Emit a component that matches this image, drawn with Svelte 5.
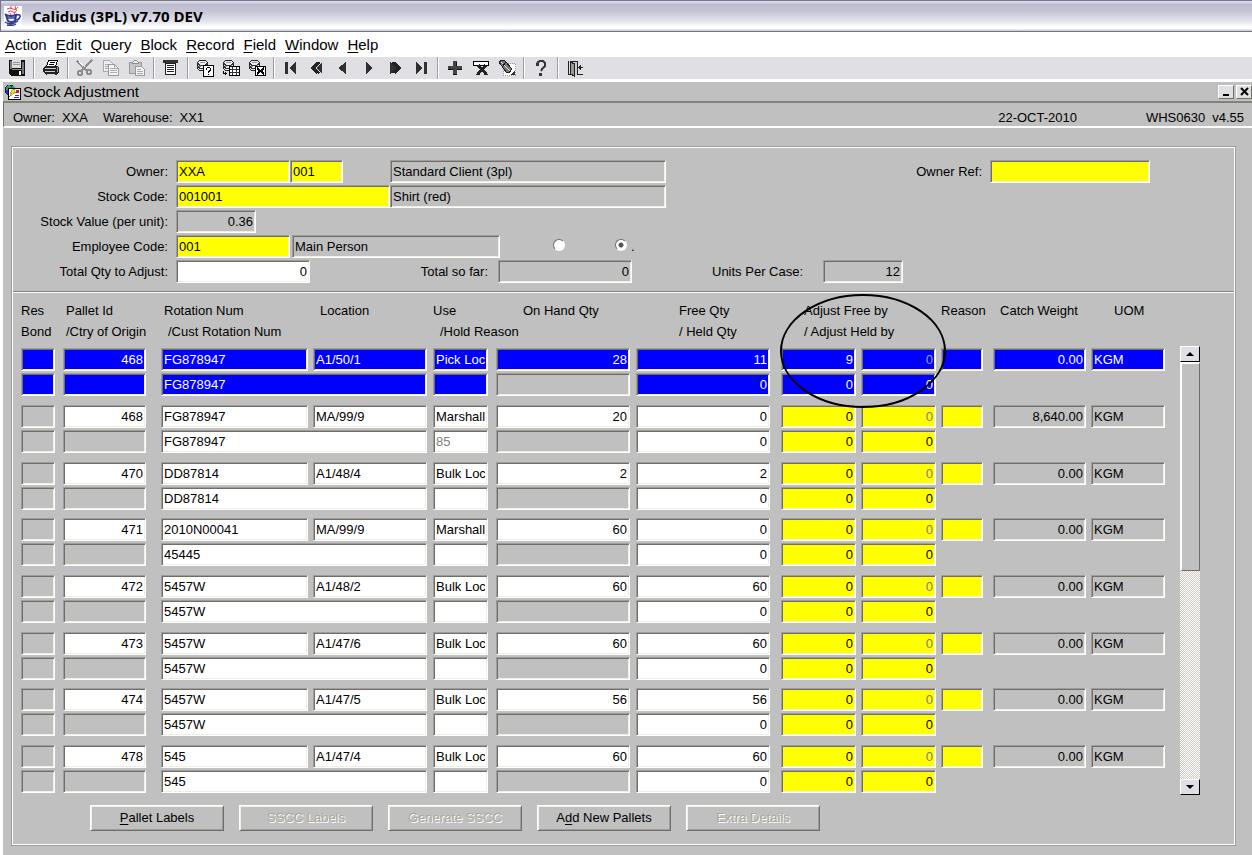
<script lang="ts">
	interface PalletRow {
		pallet: string;
		rotation: string;
		custRotation: string;
		location: string;
		use: string;
		hold?: string;
		onHand: string;
		free: string;
		adjustFree: string;
		weight: string;
	}

	const menus = ['Action', 'Edit', 'Query', 'Block', 'Record', 'Field', 'Window', 'Help'];

	const toolGroups = [
		['save'],
		['print'],
		['cut', 'copy', 'paste'],
		['list'],
		['enter query', 'execute query', 'cancel query'],
		['first', 'previous page', 'previous', 'next', 'next page', 'last'],
		['insert', 'delete', 'clear'],
		['help'],
		['exit']
	];

	let rows = $state<PalletRow[]>([
		{ pallet: '468', rotation: 'FG878947', custRotation: 'FG878947', location: 'A1/50/1', use: 'Pick Loc', onHand: '28', free: '11', adjustFree: '9', weight: '0.00' },
		{ pallet: '468', rotation: 'FG878947', custRotation: 'FG878947', location: 'MA/99/9', use: 'Marshall', hold: '85', onHand: '20', free: '0', adjustFree: '0', weight: '8,640.00' },
		{ pallet: '470', rotation: 'DD87814', custRotation: 'DD87814', location: 'A1/48/4', use: 'Bulk Loc', onHand: '2', free: '2', adjustFree: '0', weight: '0.00' },
		{ pallet: '471', rotation: '2010N00041', custRotation: '45445', location: 'MA/99/9', use: 'Marshall', onHand: '60', free: '0', adjustFree: '0', weight: '0.00' },
		{ pallet: '472', rotation: '5457W', custRotation: '5457W', location: 'A1/48/2', use: 'Bulk Loc', onHand: '60', free: '60', adjustFree: '0', weight: '0.00' },
		{ pallet: '473', rotation: '5457W', custRotation: '5457W', location: 'A1/47/6', use: 'Bulk Loc', onHand: '60', free: '60', adjustFree: '0', weight: '0.00' },
		{ pallet: '474', rotation: '5457W', custRotation: '5457W', location: 'A1/47/5', use: 'Bulk Loc', onHand: '56', free: '56', adjustFree: '0', weight: '0.00' },
		{ pallet: '478', rotation: '545', custRotation: '545', location: 'A1/47/4', use: 'Bulk Loc', onHand: '60', free: '60', adjustFree: '0', weight: '0.00' }
	]);

	let current = $state(0);
	let mode = $state('b');
	let owner = $state('XXA');
	let ownerSite = $state('001');
	let stockCode = $state('001001');
	let employee = $state('001');
	let totalQty = $state('0');
	let ownerRef = $state('');
</script>

{#snippet cell(label: string, value: string, kind: string)}
	<input class="field {kind}" aria-label={label} {value} readonly={kind.includes('grey')} />
{/snippet}

{#snippet database()}
	<path d="M1.500 3.500l2-2h6l2 2v6l-2 2h-6l-2-2z" fill="#eee" stroke="#222" />
	<path d="M1.500 4l2 2h6l2-2M1.500 7l2 2h6" fill="none" stroke="#333" />
	<path d="M4 3.500h5M3 7.500h2M9.500 6v5" fill="none" stroke="#999" />
{/snippet}

{#snippet icon(name: string)}
	<svg viewBox="0 0 18 18" width="18" height="18" shape-rendering="crispEdges" aria-hidden="true">
		{#if name === 'save'}
			<path d="M1 1h16v16H3l-2-2z" fill="#111" />
			<path d="M2 2h2v8H2zM14 3h2v12h-2z" fill="#777" />
			<path d="M4 1h9v8H4z" fill="#ddd" />
			<path d="M5 3.500h7M5 5.500h7" stroke="#999" />
			<path d="M4 10h10v1H4z" fill="#888" />
			<path d="M11 12h2v4h-2z" fill="#fff" />
		{:else if name === 'print'}
			<path d="M6.500 1.500h9l-2 6h-9z" fill="#fff" stroke="#000" />
			<path d="M8 3.500h5M7 5.500h5" stroke="#000" />
			<path d="M3 7h12l2 2v4l-2 2v1H4l-3-3v-3z" fill="#222" />
			<path d="M3 9.500h11M3 12.500h10" stroke="#ccc" />
			<path d="M15.500 8v5" stroke="#999" />
			<path d="M5 15.500h8" stroke="#ddd" />
		{:else if name === 'cut'}
			<path d="M1 2l4 4 6 6M16 1l-5 5-6 6" fill="none" stroke="#8c8c8c" stroke-width="2" />
			<circle cx="4" cy="14" r="2" fill="none" stroke="#8c8c8c" stroke-width="2" />
			<circle cx="13" cy="13" r="2" fill="none" stroke="#8c8c8c" stroke-width="2" />
			<path d="M3 3l6 5" stroke="#fff" />
		{:else if name === 'copy'}
			<path d="M1.500 1.500h6l3 3v8h-9z" fill="#eee" stroke="#aaa" />
			<path d="M3 5.500h5M3 7.500h5M3 9.500h4" stroke="#aaa" />
			<path d="M6.500 5.500h6l4 4v7h-10z" fill="#f4f4f4" stroke="#999" />
			<path d="M8 9.500h4M8 11.500h7M8 13.500h7M12.500 6v3.500H16" fill="none" stroke="#aaa" />
		{:else if name === 'paste'}
			<path d="M1.500 3.500h12v11h-12z" fill="#c6c6c6" stroke="#999" />
			<path d="M4.500 4.500v-1l2-2h2l2 2v1z" fill="#eee" stroke="#8c8c8c" />
			<path d="M7.500 7.500h6l3 3v6h-9z" fill="#f4f4f4" stroke="#999" />
			<path d="M9 10.500h4M9 12.500h6M9 14.500h6" stroke="#aaa" />
		{:else if name === 'list'}
			<path d="M1 1h15v3H1z" fill="#333" />
			<path d="M3.500 4.500h10v11h-10z" fill="#fff" stroke="#222" />
			<path d="M5 6.500h7M5 8.500h7M5 10.500h7M5 12.500h7" stroke="#222" />
		{:else if name === 'enter query'}
			{@render database()}
			<path d="M7.500 6.500h10v11h-10z" fill="#fff" stroke="#000" />
			<path d="M10.500 11V9.500l1-1h2l1 1v2l-2 1v1.500M12 15.500h1" fill="none" stroke="#000" />
		{:else if name === 'execute query'}
			{@render database()}
			<path d="M7.500 7.500h10v9h-10z" fill="#fff" stroke="#000" />
			<path d="M8 10.500h9M8 13.500h9M10.500 8v8M14.500 8v8" stroke="#333" />
			<path d="M1.500 12v2.500H5M3.500 13v3" fill="none" stroke="#000" />
		{:else if name === 'cancel query'}
			{@render database()}
			<path d="M7.500 7.500h10v9h-10z" fill="#fff" stroke="#000" />
			<path d="M9 9l7 6M16 9l-7 6" stroke="#000" stroke-width="2" />
		{:else if name === 'first'}
			<path d="M3 3h3v12H3zM14 3v12L7 9z" fill="#303030" />
		{:else if name === 'previous page'}
			<path d="M14 3v12L8 9z" fill="#303030" />
			<path d="M9.500 3.500L4 9l5.500 5.500M11.500 3.500L6.500 9l5 5.500" fill="none" stroke="#222" stroke-width="1.500" />
		{:else if name === 'previous'}
			<path d="M12 3v12L4 9z" fill="#303030" />
		{:else if name === 'next'}
			<path d="M6 3v12l7-6z" fill="#303030" />
		{:else if name === 'next page'}
			<path d="M4 3v12l6-6z" fill="#303030" />
			<path d="M6.500 3.500L11.500 9l-5 5.500M8.500 3.500L14 9l-5.500 5.500" fill="none" stroke="#222" stroke-width="1.500" />
		{:else if name === 'last'}
			<path d="M12 3h3v12h-3zM4 3v12l7-6z" fill="#303030" />
		{:else if name === 'insert'}
			<path d="M7 2h4v5h5v4h-5v5H7v-5H2V7h5z" fill="#444" />
			<path d="M7 15.500h4M2 10.500h5M11 10.500h5M10.500 3v4" stroke="#111" />
		{:else if name === 'delete'}
			<path d="M1.500 6.500v-4h15v4z" fill="#fff" stroke="#000" />
			<path d="M6 6l8 9M14 6l-8 9" stroke="#222" stroke-width="3" />
			<path d="M4 15.500h4M12 15.500h4" stroke="#222" />
		{:else if name === 'clear'}
			<path d="M5.500 4.500h12v12h-12z" fill="#fff" stroke="#999" stroke-dasharray="1 1" />
			<path d="M1 3l3-2 3 1 7 8-3 4-3-1z" fill="#777" stroke="#222" />
			<path d="M3 3l9 9" stroke="#ddd" />
			<path d="M5 7l3-4" stroke="#111" />
			<path d="M17 12v4h-5z" fill="#333" />
		{:else if name === 'help'}
			<path
				d="M5 5l1-2 2-1h3l2 2v3l-3 3-1 2"
				fill="none"
				stroke="#333"
				stroke-width="2"
				shape-rendering="auto"
			/>
			<path d="M4 4h3v3H4zM7 14h3v3H7z" fill="#333" />
		{:else if name === 'exit'}
			<path d="M2 15.500h2.500v-13h7v13H17" fill="#ccc" stroke="#222" />
			<path d="M4.500 3l4 2v12l-4-2z" fill="#999" stroke="#222" />
			<path d="M2.500 2v13M12 8.500h5M14.500 6v5M13.500 7v3" stroke="#222" />
		{/if}
	</svg>
{/snippet}

<div class="app">
	<header class="titlebar">
		<svg viewBox="0 0 18 20" width="18" height="20" aria-hidden="true">
			<path d="M0 0h18v20H0z" fill="#fff" />
			<path d="M3 3q3-2 6 0t5-2M4 6q3-2 5 0t4-2M7 0v3M11 0l1 4M6 7l1 2M11 6l-1 3" fill="none" stroke="#f0404c" />
			<path d="M2 9q5 2 10 0l-1 6q-4 2-7 0z" fill="#fff" stroke="#303c90" stroke-width="2" />
			<path d="M12 9q5-1 4 2t-4 3M4 12h7M1 16q6 4 13-1M3 19q6 1 9-1" fill="none" stroke="#303c90" stroke-width="1.500" />
		</svg>
		<h1>Calidus (3PL) v7.70 DEV</h1>
	</header>

	<nav class="menubar">
		{#each menus as menu}
			<button type="button"><u>{menu[0]}</u>{menu.slice(1)}</button>
		{/each}
	</nav>

	<div class="toolbar" role="toolbar" aria-label="Tools">
		{#each toolGroups as group}
			<div class="tool-group">
				{#each group as tool}
					<button type="button" aria-label={tool}>{@render icon(tool)}</button>
				{/each}
			</div>
		{/each}
	</div>

	<main class="window">
		<div class="window-title">
			<svg viewBox="0 0 17 16" width="17" height="16" shape-rendering="crispEdges" aria-hidden="true">
				<circle cx="6" cy="6" r="5" fill="#2038c0" stroke="#102040" />
				<path d="M2 3l3-2 2 2-2 4-3-1zM8 2l3 1 1 2H9z" fill="#30a060" />
				<path d="M4.500 4.500h12v11h-12z" fill="#fff" stroke="#000" />
				<path d="M5 13l3-4H6l3-4h2l-1 3h2z" fill="#f0e020" stroke="#807000" stroke-width="0.5" />
				<path d="M12 6h3v3h-3z" fill="#d02020" />
				<path d="M11 11.500h4M10 13.500h5" stroke="#2030c0" />
			</svg>
			<h2>Stock Adjustment</h2>
			<button type="button" aria-label="Minimize">
				<svg viewBox="0 0 11 9" width="11" height="9" aria-hidden="true"><path d="M2 7h6v2H2z" /></svg>
			</button>
			<button type="button" aria-label="Close">
				<svg viewBox="0 0 11 9" width="11" height="9" aria-hidden="true">
					<path d="M2 1l7 7M9 1L2 8" stroke="#000" stroke-width="2" />
				</svg>
			</button>
		</div>

		<div class="infobar">
			<span>Owner:</span><span>XXA</span>
			<span class="warehouse">Warehouse:</span><span>XX1</span>
			<time datetime="2010-10-22">22-OCT-2010</time>
			<span>WHS0630</span><span>v4.55</span>
		</div>

		<div class="frame">
			<section class="form">
				<div class="form-main">
					<div class="form-row">
						<label class="caption" for="owner">Owner:</label>
						<div class="codes">
							<input class="field yellow code" id="owner" bind:value={owner} />
							<input class="field yellow site" aria-label="Owner site" bind:value={ownerSite} />
						</div>
						<input class="field grey desc" aria-label="Owner name" value="Standard Client (3pl)" readonly />
					</div>
					<div class="form-row">
						<label class="caption" for="stock">Stock Code:</label>
						<div class="codes">
							<input class="field yellow" id="stock" bind:value={stockCode} />
						</div>
						<input class="field grey desc" aria-label="Stock description" value="Shirt (red)" readonly />
					</div>
					<div class="form-row">
						<label class="caption" for="value">Stock Value (per unit):</label>
						<input class="field grey num short" id="value" value="0.36" readonly />
					</div>
					<div class="form-row">
						<label class="caption" for="employee">Employee Code:</label>
						<input class="field yellow code" id="employee" bind:value={employee} />
						<input class="field grey person" aria-label="Employee name" value="Main Person" readonly />
						<div class="radios">
							<input type="radio" name="mode" value="a" aria-label="Mode" bind:group={mode} />
							<label><input type="radio" name="mode" value="b" bind:group={mode} />.</label>
						</div>
					</div>
					<div class="form-row">
						<label class="caption" for="total">Total Qty to Adjust:</label>
						<input class="field white num total" id="total" bind:value={totalQty} />
						<label class="sofar" for="sofar">Total so far:</label>
						<input class="field grey num total" id="sofar" value="0" readonly />
					</div>
				</div>
				<div class="units">
					<label for="units">Units Per Case:</label>
					<input class="field grey num short" id="units" value="12" readonly />
				</div>
				<div class="owner-ref">
					<label for="ref">Owner Ref:</label>
					<input class="field yellow" id="ref" bind:value={ownerRef} />
				</div>
			</section>

			<section class="stock">
				<div class="grid-area">
					<table>
						<colgroup>
							<col class="c-res" /><col class="c-pallet" /><col class="c-rotation" />
							<col class="c-location" /><col class="c-use" /><col class="c-onhand" />
							<col class="c-free" /><col class="c-adjust" /><col class="c-adjust" />
							<col class="c-reason" /><col class="c-weight" /><col class="c-uom" />
						</colgroup>
						<thead>
							<tr>
								<th>Res</th>
								<th class="in-1">Pallet Id</th>
								<th class="in-1">Rotation Num</th>
								<th class="in-2">Location</th>
								<th>Use</th>
								<th class="in-4">On Hand Qty</th>
								<th class="in-5">Free Qty</th>
								<th colspan="2" class="in-3 circled">
									Adjust Free by
									<svg class="ring" viewBox="0 0 166 114" width="166" height="114" aria-hidden="true">
										<ellipse cx="83" cy="57" rx="82" ry="56" fill="none" stroke="#000" stroke-width="2" />
									</svg>
								</th>
								<th>Reason</th>
								<th class="in-2">Catch Weight</th>
								<th class="in-3">UOM</th>
							</tr>
							<tr>
								<th>Bond</th>
								<th class="in-1">/Ctry of Origin</th>
								<th colspan="2" class="in-2">/Cust Rotation Num</th>
								<th colspan="2" class="in-2">/Hold Reason</th>
								<th class="in-5">/ Held Qty</th>
								<th colspan="2" class="in-3">/ Adjust Held by</th>
								<th></th><th></th><th></th>
							</tr>
						</thead>
						{#each rows as row, i}
							{@const on = i === current}
							{@const data = on ? 'blue' : 'white'}
							{@const flag = on ? 'blue' : 'grey'}
							{@const entry = on ? 'blue' : 'yellow'}
							<tbody onfocusin={() => (current = i)}>
								<tr>
									<td class="g-8">{@render cell('Reserved', '', flag)}</td>
									<td class="g-15">{@render cell('Pallet Id', row.pallet, data + ' num')}</td>
									<td class="g-5">{@render cell('Rotation Num', row.rotation, data)}</td>
									<td class="g-6">{@render cell('Location', row.location, data)}</td>
									<td class="g-8">{@render cell('Use', row.use, data)}</td>
									<td class="g-6">{@render cell('On Hand Qty', row.onHand, data + ' num')}</td>
									<td class="g-11">{@render cell('Free Qty', row.free, data + ' num')}</td>
									<td class="g-5">{@render cell('Adjust Free by', row.adjustFree, entry + ' num')}</td>
									<td class="g-5">{@render cell('Adjust Free cases', '0', entry + ' num dim')}</td>
									<td class="g-10">{@render cell('Reason', '', entry)}</td>
									<td class="g-5">{@render cell('Catch Weight', row.weight, flag + ' num')}</td>
									<td>{@render cell('UOM', 'KGM', flag)}</td>
								</tr>
								<tr>
									<td class="g-8">{@render cell('Bond', '', flag)}</td>
									<td class="g-15">{@render cell('Country of Origin', '', flag)}</td>
									<td class="g-6" colspan="2">{@render cell('Cust Rotation Num', row.custRotation, data)}</td>
									<td class="g-8">{@render cell('Hold Reason', row.hold ?? '', data + ' dim')}</td>
									<td class="g-6">{@render cell('On hand, held', '', 'grey')}</td>
									<td class="g-11">{@render cell('Held Qty', '0', data + ' num')}</td>
									<td class="g-5">{@render cell('Adjust Held by', '0', entry + ' num')}</td>
									<td class="g-5">{@render cell('Adjust Held cases', '0', entry + ' num')}</td>
									<td colspan="3"></td>
								</tr>
							</tbody>
						{/each}
					</table>

					<div class="scrollbar">
						<button type="button" aria-label="Scroll up">
							<svg viewBox="0 0 8 4" width="8" height="4" aria-hidden="true"><path d="M4 0l4 4H0z" /></svg>
						</button>
						<div class="track"><div class="thumb"></div></div>
						<button type="button" aria-label="Scroll down">
							<svg viewBox="0 0 8 4" width="8" height="4" aria-hidden="true"><path d="M0 0h8L4 4z" /></svg>
						</button>
					</div>
				</div>

				<div class="actions">
					<button type="button"><u>P</u>allet Labels</button>
					<button type="button" disabled>SSCC Labels</button>
					<button type="button" disabled>Generate SSCC</button>
					<button type="button">A<u>d</u>d New Pallets</button>
					<button type="button" disabled>Extra Details</button>
				</div>
			</section>
		</div>
	</main>
</div>

<style>
	:global(body) {
		background: #fff;
	}
	.app {
		display: flex;
		flex-direction: column;
		min-height: 100vh;
		color: #000;
		font: 13px/16px 'Liberation Sans', Arial, sans-serif;
	}
	button,
	input {
		box-sizing: border-box;
		font: inherit;
		color: inherit;
		border-radius: 0;
		margin: 0;
	}
	h1,
	h2 {
		margin: 0;
	}

	.titlebar {
		display: flex;
		align-items: center;
		gap: 10px;
		height: 32px;
		padding-left: 3px;
		box-sizing: border-box;
		border: solid #74748f;
		border-width: 1px 0 1px 1px;
		background: linear-gradient(#e4e4ee, #bcbcce 12%, #c6c6d6 35%, #e6e6ee 70%, #fff 86%, #fff 92%, #c0c0d0);
	}
	.titlebar h1 {
		font: bold 15px/20px 'Trebuchet MS', 'Open Sans', sans-serif;
	}

	.menubar {
		display: flex;
		gap: 9px;
		height: 25px;
		padding-left: 5px;
		background: #fff;
	}
	.menubar button {
		padding: 0;
		border: 0;
		background: none;
		font-size: 15px;
	}
	u {
		text-underline-offset: 2px;
	}

	.toolbar {
		display: flex;
		height: 22px;
		padding-left: 4px;
		background: #e0dfe3;
	}
	.tool-group {
		display: flex;
	}
	.tool-group + .tool-group::before {
		content: '';
		width: 1px;
		margin: 0 3px;
		background: #9d9da1;
		border-right: 1px solid #fff;
	}
	.tool-group button {
		display: grid;
		place-items: center;
		width: 26px;
		padding: 0;
		border: 0;
		background: none;
	}

	.window {
		flex: 1;
		margin: 3px 0 0 3px;
		background: #c0c0c0;
	}
	.window-title {
		display: flex;
		align-items: center;
		gap: 2px;
		height: 19px;
		padding-left: 1px;
	}
	.window-title h2 {
		flex: 1;
		font-size: 15px;
		font-weight: normal;
	}
	.window-title button {
		display: grid;
		place-items: center;
		width: 16px;
		height: 14px;
		padding: 0;
		background: #e0dfe3;
		border: 1px solid;
		border-color: #fff #716f64 #716f64 #fff;
	}
	.infobar {
		display: flex;
		gap: 7px;
		align-items: center;
		height: 27px;
		box-sizing: border-box;
		padding: 6px 8px 0 9px;
		border: solid #716f64;
		border-width: 2px 0 2px 1px;
		border-top-color: #84827a;
		border-bottom-color: #fff;
	}
	.warehouse {
		margin-left: 8px;
	}
	.infobar time {
		margin: 0 62px 0 auto;
	}

	.frame {
		margin: 18px 16px 9px 8px;
		border: 1px solid #9d9da1;
		outline: 1px solid #fff;
		outline-offset: -2px;
	}
	.field {
		width: 100%;
		height: 23px;
		padding: 0 2px;
		border: 1px solid;
		border-color: #9d9da1 #fff #fff #9d9da1;
		box-shadow:
			inset 1px 1px #716f64,
			inset -1px -1px #f1efe2;
		outline: none;
	}
	.white {
		background: #fff;
	}
	.yellow {
		background: #ff0;
	}
	.grey {
		background: #c0c0c0;
	}
	.num {
		text-align: right;
	}
	.dim {
		color: #808080;
	}
	.blue {
		background: #00f;
		color: #fff;
	}
	.blue.dim {
		color: #a0a0a4;
	}

	.form {
		display: flex;
		padding: 13px 85px 8px 1px;
		border-bottom: 1px solid #848284;
	}
	.form-main {
		display: flex;
		flex-direction: column;
		gap: 2px;
		width: 654px;
	}
	.form-row {
		display: flex;
		align-items: center;
		height: 23px;
	}
	.caption {
		width: 155px;
		margin-right: 8px;
		text-align: right;
	}
	.codes {
		display: flex;
		width: 214px;
	}
	.code {
		width: 114px;
	}
	.site {
		width: 53px;
	}
	.desc {
		width: 276px;
	}
	.short {
		width: 80px;
	}
	.person {
		width: 208px;
		margin-left: 2px;
	}
	.total {
		width: 134px;
	}
	.sofar {
		width: 178px;
		margin-right: 10px;
		text-align: right;
	}
	.radios {
		display: flex;
		gap: 50px;
		margin-left: 53px;
	}
	.radios label {
		display: flex;
		gap: 4px;
	}
	input[type='radio'] {
		appearance: none;
		width: 12px;
		height: 12px;
		border: 1px solid;
		border-color: #716f64 #fff #fff #716f64;
		border-radius: 50%;
		background: #fff;
	}
	input[type='radio']:checked {
		background: radial-gradient(circle, #555 2px, #fff 3px);
	}
	.units,
	.owner-ref {
		display: flex;
		align-items: center;
		height: 23px;
	}
	.units {
		align-self: flex-end;
		gap: 20px;
		margin-left: 45px;
	}
	.owner-ref {
		gap: 8px;
		margin-left: auto;
	}
	.owner-ref .field {
		width: 160px;
	}

	.stock {
		padding: 7px 35px 14px 9px;
		border-top: 1px solid #fff;
	}
	.grid-area {
		display: flex;
		gap: 15px;
	}
	table {
		flex: 1;
		table-layout: fixed;
		width: 100%;
		min-width: 1144px;
		border-collapse: collapse;
	}
	.c-res {
		width: 42px;
	}
	.c-pallet,
	.c-weight {
		width: 98px;
	}
	.c-rotation {
		width: 152px;
	}
	.c-location {
		width: 120px;
	}
	.c-use {
		width: 63px;
	}
	.c-onhand {
		width: 140px;
	}
	.c-free {
		width: 145px;
	}
	.c-adjust {
		width: 80px;
	}
	.c-reason {
		width: 52px;
	}
	.c-uom {
		width: 74px;
	}
	th {
		height: 21px;
		padding: 0;
		font-weight: normal;
		text-align: left;
		white-space: nowrap;
	}
	.in-1 {
		padding-left: 3px;
	}
	.in-2 {
		padding-left: 7px;
	}
	.in-3 {
		padding-left: 23px;
	}
	.in-4 {
		padding-left: 27px;
	}
	.in-5 {
		padding-left: 43px;
	}
	.circled {
		position: relative;
	}
	.ring {
		position: absolute;
		left: -1px;
		top: -6px;
		z-index: 1;
		pointer-events: none;
	}
	td {
		height: 25px;
		padding: 0;
		vertical-align: top;
	}
	tbody tr:first-child td {
		padding-top: 7px;
	}
	tbody:nth-of-type(3n + 1) tr:first-child td {
		padding-top: 6px;
	}
	td .field {
		display: block;
	}
	.g-5 {
		padding-right: 5px;
	}
	.g-6 {
		padding-right: 6px;
	}
	.g-8 {
		padding-right: 8px;
	}
	.g-10 {
		padding-right: 10px;
	}
	.g-11 {
		padding-right: 11px;
	}
	.g-15 {
		padding-right: 15px;
	}

	.scrollbar {
		display: flex;
		flex-direction: column;
		width: 20px;
		margin-top: 46px;
	}
	.scrollbar button {
		display: grid;
		place-items: center;
		height: 16px;
		padding: 0;
		background: #e0dfe3;
		border: 1px solid;
		border-color: #fff #000 #000 #fff;
	}
	.track {
		flex: 1;
		background: repeating-conic-gradient(#cfcbc3 0 25%, #fff 0 50%) 0 0 / 2px 2px;
	}
	.thumb {
		height: 50%;
		box-sizing: border-box;
		background: #c0c0c0;
		border: solid;
		border-width: 2px 1px 1px 2px;
		border-color: #fff #716f64 #716f64 #fff;
	}

	.actions {
		display: flex;
		gap: 15px;
		padding: 10px 0 0 69px;
	}
	.actions button {
		width: 134px;
		height: 26px;
		padding: 0;
		background: #c0c0c0;
		border: 1px solid;
		border-color: #fff #716f64 #716f64 #fff;
		box-shadow:
			inset 1px 1px #f1efe2,
			inset -1px -1px #9d9da1;
	}
	.actions button:disabled {
		color: #aca899;
		text-shadow: 1px 1px #fff;
	}
</style>
